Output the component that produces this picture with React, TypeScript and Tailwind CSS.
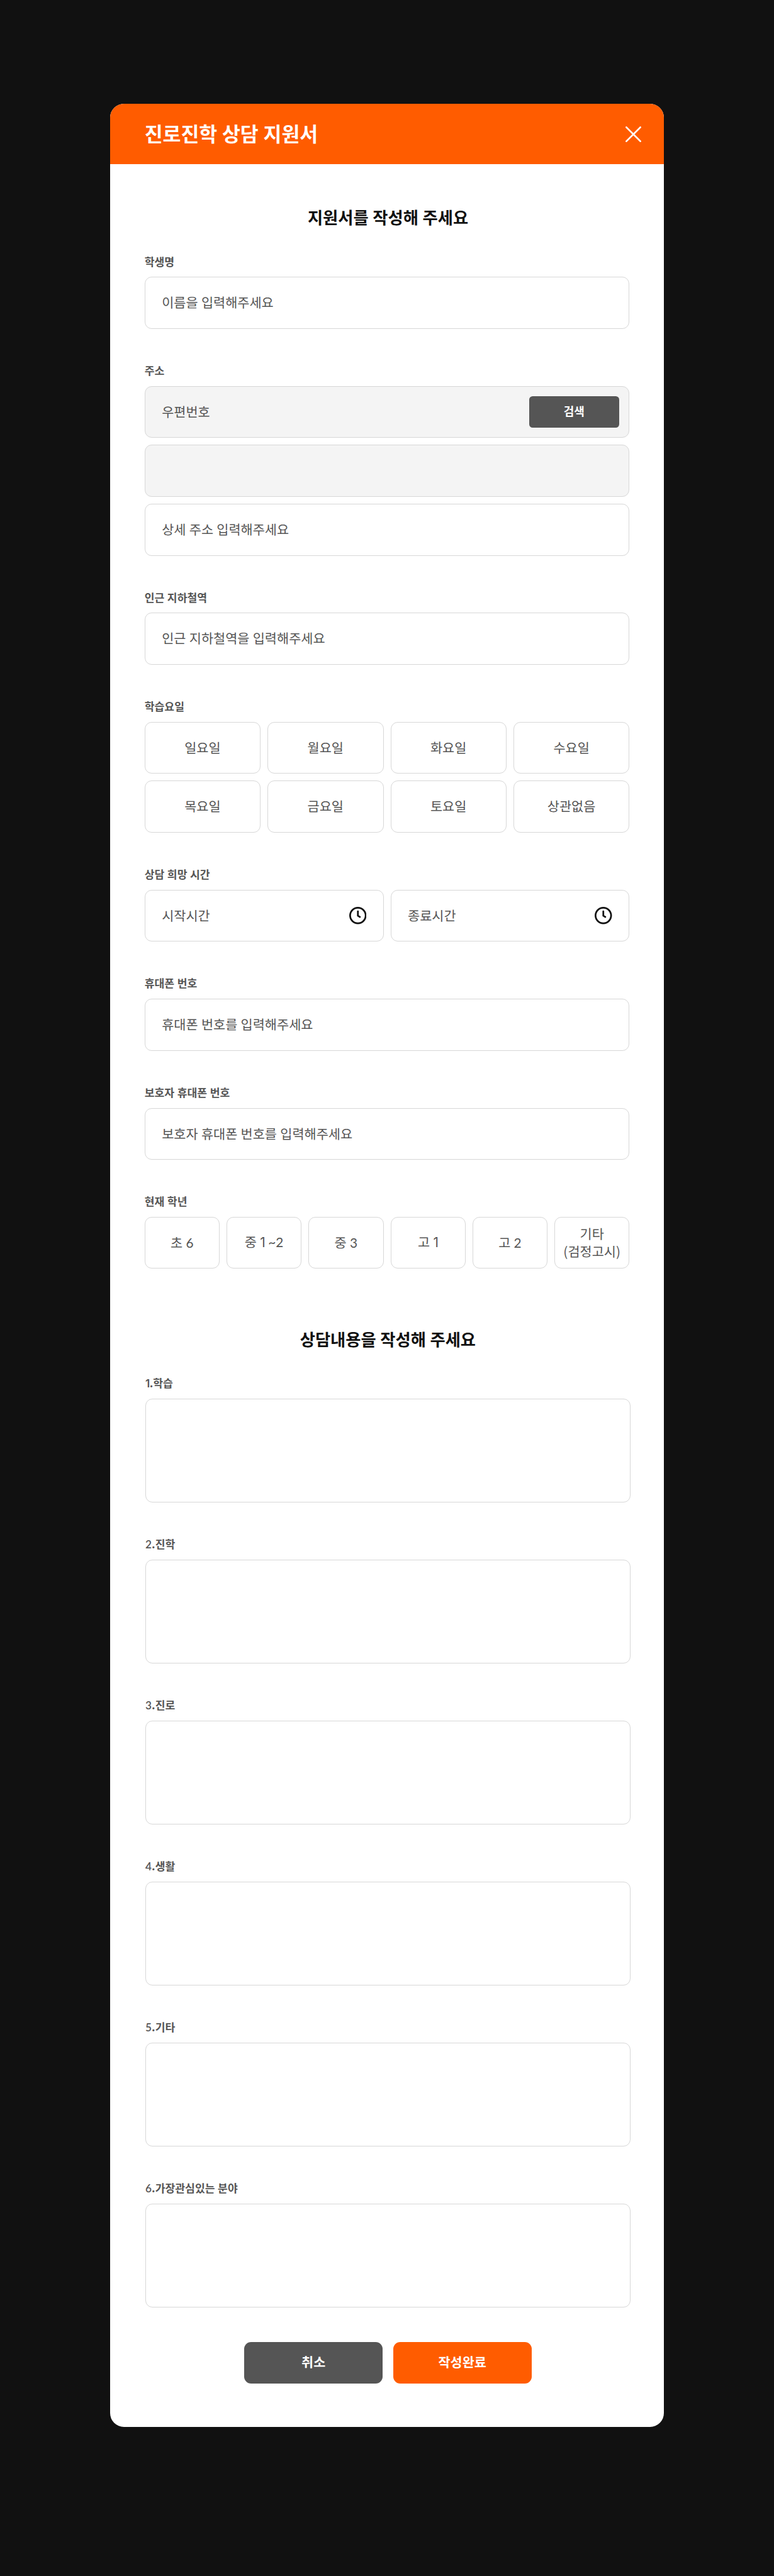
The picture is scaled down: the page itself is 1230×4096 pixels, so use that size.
import React from "react";

const boxClass =
  "box-border h-[82.6px] rounded-[11px] border border-[#d7d7d7] text-[20.8px] leading-[27.5px] text-[#555]";

const days = ["일요일", "월요일", "화요일", "수요일", "목요일", "금요일", "토요일", "상관없음"];
const grades = ["초 6", "중 1 ~2", "중 3", "고 1", "고 2", "기타\n(검정고시)"];
const topics = ["1.학습", "2.진학", "3.진로", "4.생활", "5.기타", "6.가장관심있는 분야"];

/** Sets digits in a geometric Latin face next to the Korean text. */
function Mixed({ text }: { text: string }) {
  return (
    <>
      {text.split(/(1|[2-9~])/).map((part, i) =>
        part === "1" ? (
          <span key={i} className="mr-[-0.04em] font-['Inter']">{part}</span>
        ) : /^[2-9~]$/.test(part) ? (
          <span key={i} className="font-['Lato']">{part}</span>
        ) : (
          part
        ),
      )}
    </>
  );
}

function Field({ label, children }: { label: string; children: React.ReactNode }) {
  return (
    <section className="flex flex-col gap-[11px]">
      <h3 className="h-[24.8px] pb-[2px] text-[17.2px] leading-[22.8px] font-semibold text-[#555]">
        <Mixed text={label} />
      </h3>
      {children}
    </section>
  );
}

function TextBox({ text, muted, children }: { text?: string; muted?: boolean; children?: React.ReactNode }) {
  return (
    <div className={`${boxClass} flex items-center justify-between pl-[26.5px] ${muted ? "bg-[#f4f4f4]" : "bg-white"}`}>
      <span className="pb-[1px]">{text}</span>
      {children}
    </div>
  );
}

function Choice({ text }: { text: string }) {
  return (
    <div className={`${boxClass} flex items-center justify-center bg-white pb-[1px] text-center whitespace-pre`}>
      <span>
        <Mixed text={text} />
      </span>
    </div>
  );
}

function Clock() {
  return (
    <svg viewBox="0 0 40 40" className="mr-[26.5px] size-[27.5px]" fill="none" stroke="#111" strokeWidth="4" strokeLinecap="round" strokeLinejoin="round">
      <circle cx="20" cy="20" r="18" />
      <path d="M20 10.3V20.6L24.6 23.2" />
    </svg>
  );
}

function Heading({ children }: { children: React.ReactNode }) {
  return (
    <h2 className="h-[33px] pb-[3px] text-center text-[26.3px] leading-[30px] font-semibold text-[#111]">
      {children}
    </h2>
  );
}

export default function App() {
  return (
    <main className="flex min-h-[4096px] justify-center bg-[#111] pt-[165.2px] font-['Noto_Sans_CJK_KR',sans-serif] [word-spacing:0.04em]">
      <div className="flex h-[3694px] w-[880.6px] flex-col overflow-hidden rounded-[22px] bg-white">
        <header className="flex h-[96.3px] shrink-0 items-center justify-between bg-[#ff5c00] pr-[36.5px] pl-[55px] text-white">
          <h1 className="pb-[3px] text-[31.4px] leading-[40px] font-semibold">진로진학 상담 지원서</h1>
          <svg viewBox="0 0 36 36" className="size-[25px]" fill="none" stroke="currentColor" strokeWidth="4" strokeLinecap="round">
            <path d="M2 2L34 34M34 2L2 34" />
          </svg>
        </header>

        <div className="flex flex-col px-[55px] pt-[68.8px]">
          <div className="pl-[3px]">
            <Heading>지원서를 작성해 주세요</Heading>
          </div>
          <div className="mt-[41.3px] flex flex-col gap-[55px]">
            <Field label="학생명">
              <TextBox text="이름을 입력해주세요" />
            </Field>
            <Field label="주소">
              <TextBox text="우편번호" muted>
                <button className="mr-[15.5px] h-[49.5px] w-[143px] rounded-[5.5px] bg-[#555] pb-[2px] text-[18px] font-semibold text-white">
                  검색
                </button>
              </TextBox>
              <TextBox muted />
              <TextBox text="상세 주소 입력해주세요" />
            </Field>
            <Field label="인근 지하철역">
              <TextBox text="인근 지하철역을 입력해주세요" />
            </Field>
            <Field label="학습요일">
              <div className="grid grid-cols-4 gap-[11px]">
                {days.map((d) => (
                  <Choice key={d} text={d} />
                ))}
              </div>
            </Field>
            <Field label="상담 희망 시간">
              <div className="grid grid-cols-2 gap-[11px]">
                <TextBox text="시작시간">
                  <Clock />
                </TextBox>
                <TextBox text="종료시간">
                  <Clock />
                </TextBox>
              </div>
            </Field>
            <Field label="휴대폰 번호">
              <TextBox text="휴대폰 번호를 입력해주세요" />
            </Field>
            <Field label="보호자 휴대폰 번호">
              <TextBox text="보호자 휴대폰 번호를 입력해주세요" />
            </Field>
            <Field label="현재 학년">
              <div className="grid grid-cols-6 gap-[11px]">
                {grades.map((g) => (
                  <Choice key={g} text={g} />
                ))}
              </div>
            </Field>
          </div>
        </div>

        <div className="flex flex-col pt-[96.3px] pr-[53.6px] pl-[56.4px]">
          <Heading>상담내용을 작성해 주세요</Heading>
          <div className="mt-[41.3px] flex flex-col gap-[55px]">
            {topics.map((t) => (
              <Field key={t} label={t}>
                <div className="h-[165.2px] rounded-[11px] border border-[#d7d7d7]" />
              </Field>
            ))}
          </div>
          <div className="mt-[55px] flex justify-center gap-[16.5px] text-[20.7px] font-semibold text-white">
            <button className="h-[66px] w-[220px] rounded-[11px] bg-[#555] pb-[2px]">취소</button>
            <button className="h-[66px] w-[220px] rounded-[11px] bg-[#ff5c00] pb-[2px]">작성완료</button>
          </div>
        </div>
      </div>
    </main>
  );
}
